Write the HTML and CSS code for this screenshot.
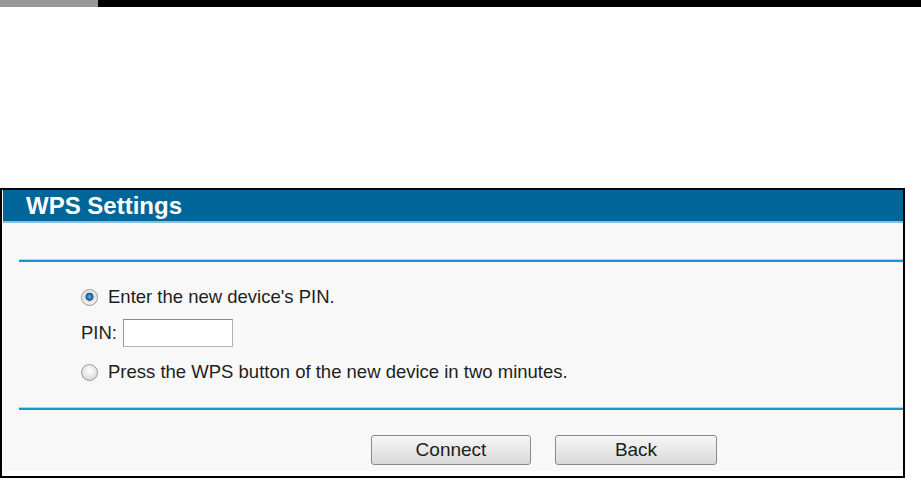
FILE: index.html
```html
<!DOCTYPE html>
<html lang="en">
<head>
    <meta charset="UTF-8">
    <title>WPS Settings</title>
    <link rel="stylesheet" href="styles.css">
</head>
<body>
    <div class="topbar">
        <div class="topbar-tab"></div>
        <div class="topbar-rest"></div>
    </div>

    <div class="panel">
        <div class="panel-title">WPS Settings</div>
        <div class="panel-body">
            <div class="rule"></div>

            <form class="options">
                <label class="option">
                    <input type="radio" name="mode" value="pin" checked>
                    <span>Enter the new device's PIN.</span>
                </label>
                <div class="pin-row">
                    <label for="pin">PIN:</label>
                    <input type="text" id="pin" name="pin">
                </div>
                <label class="option option-last">
                    <input type="radio" name="mode" value="pbc">
                    <span>Press the WPS button of the new device in two minutes.</span>
                </label>
            </form>

            <div class="rule"></div>

            <div class="buttons">
                <button type="button" class="btn">Connect</button>
                <button type="button" class="btn btn-back">Back</button>
            </div>
        </div>
    </div>
</body>
</html>
```

FILE: styles.css
```css
body {
    margin: 0;
    padding: 0;
    background-color: #ffffff;
    font-family: "Liberation Sans", Arial, sans-serif;
    color: #1e1e1e;
}

/* black strip across the top of the page */
.topbar {
    display: flex;
    height: 7px;
}
.topbar-tab {
    width: 98px;
    background-color: #999999;
}
.topbar-rest {
    flex: 1;
    background-color: #000000;
}

.panel {
    box-sizing: border-box;
    width: 905px;
    margin-top: 181px;
    border: 2px solid #000000;
    padding: 0 0 5px 1px;
    background-color: #ffffff;
}
.panel-title {
    height: 31px;
    line-height: 31px;
    padding-left: 23px;
    background-color: #006699;
    border-bottom: 2px solid #8dbdd6;
    color: #ffffff;
    font-weight: bold;
    font-size: 24px;
}
.panel-body {
    background-color: #f8f8f8;
    padding: 36px 0 6px 16px;
}

.rule {
    height: 2px;
    background-color: #1298d0;
    border-top: 1px solid #a6d8ee;
}

.options {
    display: flex;
    flex-direction: column;
    padding: 0 0 0 62px;
    margin: 0;
    font-size: 18.5px;
}
.option {
    display: flex;
    align-items: center;
    height: 24px;
    margin-top: 23px;
}
.option-last {
    margin-top: 13px;
    margin-bottom: 23px;
}
.option input[type="radio"] {
    appearance: none;
    -webkit-appearance: none;
    width: 17px;
    height: 17px;
    margin: 0 10px 0 0;
    border-radius: 50%;
    border: 1px solid #9a9a9a;
    background: radial-gradient(circle at 50% 40%, #ffffff 0%, #e4e4e4 55%, #c4c4c4 100%);
    box-sizing: border-box;
}
.option input[type="radio"]:checked {
    background: radial-gradient(circle at 50% 45%, #5fb0e6 0%, #1f70b0 25%, #124878 33%, #d6d6d6 38%, #f2f2f2 65%, #c4c4c4 100%);
}

.pin-row {
    display: flex;
    align-items: center;
    margin-top: 10px;
    height: 28px;
}
.pin-row label {
    margin-right: 6px;
}
.pin-row input {
    box-sizing: border-box;
    width: 110px;
    height: 28px;
    border: 1px solid #b4b4b4;
    border-top-color: #8a8a8a;
    border-left-color: #999999;
    background-color: #ffffff;
    padding: 0 4px;
    font-size: 16px;
}

.buttons {
    display: flex;
    gap: 24px;
    margin-top: 25px;
    padding-left: 352px;
}
.btn {
    box-sizing: border-box;
    width: 160px;
    height: 30px;
    border: 1px solid #8a8a8a;
    border-radius: 3px;
    background: linear-gradient(#f6f6f6, #e8e8e8 50%, #d9d9d9);
    font-family: "Liberation Sans", Arial, sans-serif;
    font-size: 19px;
    color: #1e1e1e;
    padding: 0;
}
.btn-back {
    width: 162px;
}
```
